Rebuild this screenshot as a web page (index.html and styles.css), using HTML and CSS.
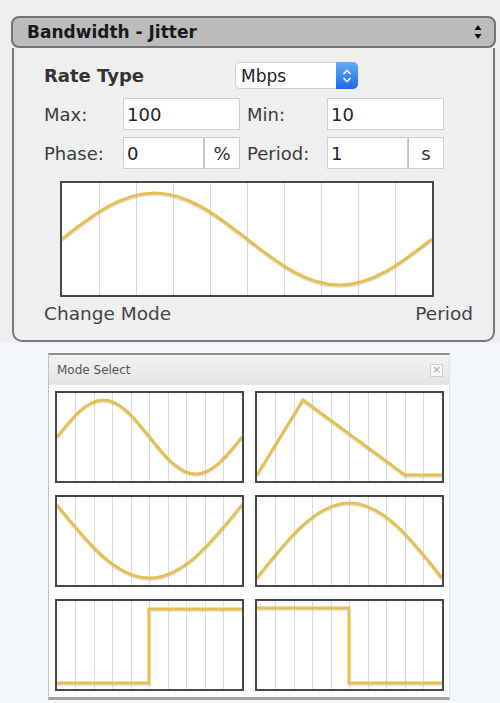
FILE: index.html
```html
<!DOCTYPE html>
<html>
<head>
<meta charset="utf-8">
<link rel="stylesheet" href="styles.css">
</head>
<body>
<div class="top">
  <div class="panel">
    <div class="head">
      <span class="head-title">Bandwidth - Jitter</span>
      <svg class="head-arrows" width="8" height="14" viewBox="0 0 8 14"><path d="M4,0L7.5,5H0.5Z M4,14L7.5,9H0.5Z" fill="#111"/></svg>
    </div>
    <div class="body">
      <div class="rate-row">
        <span class="label bold rate-label">Rate Type</span>
        <div class="select">
          <span class="select-text">Mbps</span>
          <span class="select-btn">
            <svg width="10" height="16" viewBox="0 0 10 16"><path d="M1.5,6L5,2.5L8.5,6 M1.5,10L5,13.5L8.5,10" fill="none" stroke="#fff" stroke-width="1.6"/></svg>
          </span>
        </div>
      </div>
      <div class="field-row first">
        <span class="label lab-a">Max:</span>
        <div class="input wide">100</div>
        <span class="label lab-b">Min:</span>
        <div class="input wide">10</div>
      </div>
      <div class="field-row">
        <span class="label lab-a">Phase:</span>
        <div class="input narrow">0</div><div class="unit">%</div>
        <span class="label lab-b">Period:</span>
        <div class="input narrow">1</div><div class="unit">s</div>
      </div>
      <svg class="main-chart" width="370" height="112" viewBox="0 0 370 112">
        <path d="M37.5,0V112M74.5,0V112M111.5,0V112M148.5,0V112M185.5,0V112M222.5,0V112M259.5,0V112M296.5,0V112M333.5,0V112" stroke="#d6d6d6" stroke-width="1"/>
        <path d="M0,56 C30.2,32.4 59,10 92.5,10 C126,10 154.8,32.4 185,56 C215.2,79.6 244,102 277.5,102 C311,102 339.8,79.6 370,56" fill="none" stroke="rgba(110,90,30,0.18)" stroke-width="3" transform="translate(0,1.5)"/>
        <path d="M0,56 C30.2,32.4 59,10 92.5,10 C126,10 154.8,32.4 185,56 C215.2,79.6 244,102 277.5,102 C311,102 339.8,79.6 370,56" fill="none" stroke="#e3bf55" stroke-width="3"/>
      </svg>
      <div class="foot">
        <span>Change Mode</span>
        <span>Period</span>
      </div>
    </div>
  </div>
</div>
<div class="bottom">
  <div class="dialog">
    <div class="dlg-title">
      <span>Mode Select</span>
      <span class="close">×</span>
    </div>
    <div class="grid">
      <svg class="mini" width="185" height="88" viewBox="0 0 185 88">
        <path class="g" d="M18.5,0V88M37.5,0V88M55.5,0V88M74.5,0V88M92.5,0V88M111.5,0V88M129.5,0V88M148.5,0V88M166.5,0V88"/>
        <path class="sh" d="M0,44 C15.1,25 29.5,7 46.25,7 C63,7 77.4,25 92.5,44 C107.6,63 122,81 138.75,81 C155.5,81 169.9,63 185,44"/>
        <path class="c" d="M0,44 C15.1,25 29.5,7 46.25,7 C63,7 77.4,25 92.5,44 C107.6,63 122,81 138.75,81 C155.5,81 169.9,63 185,44"/>
      </svg>
      <svg class="mini" width="185" height="88" viewBox="0 0 185 88">
        <path class="g" d="M18.5,0V88M37.5,0V88M55.5,0V88M74.5,0V88M92.5,0V88M111.5,0V88M129.5,0V88M148.5,0V88M166.5,0V88"/>
        <path class="sh" d="M0,82 L46,7 L148,82 L185,82"/>
        <path class="c" d="M0,82 L46,7 L148,82 L185,82"/>
      </svg>
      <svg class="mini" width="185" height="88" viewBox="0 0 185 88">
        <path class="g" d="M18.5,0V88M37.5,0V88M55.5,0V88M74.5,0V88M92.5,0V88M111.5,0V88M129.5,0V88M148.5,0V88M166.5,0V88"/>
        <path class="sh" d="M0,8 C30.2,45.4 59,81 92.5,81 C126,81 154.8,45.4 185,8"/>
        <path class="c" d="M0,8 C30.2,45.4 59,81 92.5,81 C126,81 154.8,45.4 185,8"/>
      </svg>
      <svg class="mini" width="185" height="88" viewBox="0 0 185 88">
        <path class="g" d="M18.5,0V88M37.5,0V88M55.5,0V88M74.5,0V88M92.5,0V88M111.5,0V88M129.5,0V88M148.5,0V88M166.5,0V88"/>
        <path class="sh" d="M0,81 C30.2,42.6 59,6 92.5,6 C126,6 154.8,42.6 185,81"/>
        <path class="c" d="M0,81 C30.2,42.6 59,6 92.5,6 C126,6 154.8,42.6 185,81"/>
      </svg>
      <svg class="mini" width="185" height="88" viewBox="0 0 185 88">
        <path class="g" d="M18.5,0V88M37.5,0V88M55.5,0V88M74.5,0V88M92.5,0V88M111.5,0V88M129.5,0V88M148.5,0V88M166.5,0V88"/>
        <path class="sh" d="M0,82 H92 V8 H185"/>
        <path class="c" d="M0,82 H92 V8 H185"/>
      </svg>
      <svg class="mini" width="185" height="88" viewBox="0 0 185 88">
        <path class="g" d="M18.5,0V88M37.5,0V88M55.5,0V88M74.5,0V88M92.5,0V88M111.5,0V88M129.5,0V88M148.5,0V88M166.5,0V88"/>
        <path class="sh" d="M0,7 H92 V82 H185"/>
        <path class="c" d="M0,7 H92 V82 H185"/>
      </svg>
    </div>
  </div>
</div>
</body>
</html>
```
FILE: styles.css
```css
html, body {
  margin: 0;
  padding: 0;
}
body {
  width: 500px;
  height: 703px;
  overflow: hidden;
  background: #f3f6fa;
  font-family: "DejaVu Sans", Verdana, sans-serif;
  color: #333;
}
.top {
  background: #eeeff1;
  padding: 16px 4px 1px 11px;
}
.panel {
  width: 485px;
}
.head {
  box-sizing: border-box;
  height: 32px;
  background: #bcbcbc;
  border: 2px solid #737373;
  border-radius: 8px;
  display: flex;
  align-items: center;
  justify-content: space-between;
  padding: 0 12px 0 14px;
}
.head-title {
  font-weight: bold;
  font-size: 17px;
  color: #1a1a1a;
}
.head-arrows {
  display: block;
}
.body {
  box-sizing: border-box;
  height: 294px;
  margin: 0 1px 0 1px;
  background: #efefef;
  border: 2px solid #7a7a7a;
  border-top: none;
  border-radius: 0 0 10px 10px;
  padding: 14px 20px 0 30px;
}
.label {
  font-size: 18px;
  color: #3d3d3d;
}
.bold {
  font-weight: bold;
  color: #333;
}
.rate-row {
  display: flex;
  align-items: center;
  height: 27px;
}
.rate-label {
  width: 191px;
}
.select {
  box-sizing: border-box;
  width: 123px;
  height: 27px;
  background: #fff;
  border: 1px solid #cdcdcd;
  border-radius: 5px;
  display: flex;
  align-items: stretch;
  justify-content: space-between;
}
.select-text {
  font-size: 17px;
  color: #222;
  padding-left: 5px;
  display: flex;
  align-items: center;
}
.select-btn {
  width: 22px;
  margin: -1px -1px -1px 0;
  border-radius: 0 5px 5px 0;
  background: linear-gradient(#62acf9, #1c6ce6);
  display: flex;
  align-items: center;
  justify-content: center;
}
.select-btn svg {
  display: block;
}
.field-row {
  display: flex;
  align-items: center;
  height: 32px;
  margin-top: 7px;
}
.field-row.first {
  margin-top: 9px;
}
.lab-a {
  width: 79px;
}
.lab-b {
  width: 80px;
  padding-left: 7px;
}
.input {
  box-sizing: border-box;
  height: 32px;
  background: #fff;
  border: 1px solid #cfcfcf;
  font-size: 18px;
  color: #222;
  padding-left: 3px;
  display: flex;
  align-items: center;
}
.wide {
  width: 117px;
}
.narrow {
  width: 81px;
}
.unit {
  box-sizing: border-box;
  width: 36px;
  height: 32px;
  background: #fff;
  border: 1px solid #cfcfcf;
  border-left: 1px solid #c4c4c4;
  font-size: 18px;
  color: #333;
  display: flex;
  align-items: center;
  justify-content: center;
}
.main-chart {
  display: block;
  margin: 12px 0 0 16px;
  background: #fff;
  border: 2px solid #474747;
}
.foot {
  display: flex;
  justify-content: space-between;
  margin-top: 6px;
  font-size: 18.5px;
  color: #444;
  line-height: 22px;
}
.bottom {
  padding: 10px 50px 0 48px;
}
.dialog {
  box-sizing: border-box;
  width: 402px;
  background: #fdfdfd;
  border-top: 2px solid #8f8f8f;
  border-left: 1px solid #c2c2c2;
  border-right: 1px solid #e2e2e2;
  border-bottom: 3px solid #a3a3a3;
}
.dlg-title {
  height: 30px;
  background: linear-gradient(#f2f2f2, #e3e3e3);
  display: flex;
  align-items: center;
  justify-content: space-between;
  padding: 0 6px 0 8px;
  font-size: 12px;
  color: #555;
}
.close {
  box-sizing: border-box;
  width: 13px;
  height: 13px;
  border: 1px solid #cfcfcf;
  background: #f7f7f7;
  color: #aaa;
  font-size: 11px;
  line-height: 10px;
  text-align: center;
}
.grid {
  display: grid;
  grid-template-columns: 189px 189px;
  column-gap: 11px;
  row-gap: 12px;
  padding: 6px 5px 6px 6px;
}
.mini {
  display: block;
  background: #fff;
  border: 2px solid #474747;
}
.g {
  stroke: #dadada;
  stroke-width: 1;
  fill: none;
}
.c {
  fill: none;
  stroke: #e3bf55;
  stroke-width: 3;
}
.sh {
  fill: none;
  stroke: rgba(110, 90, 30, 0.16);
  stroke-width: 3;
  transform: translate(0, 1.5px);
}
```
